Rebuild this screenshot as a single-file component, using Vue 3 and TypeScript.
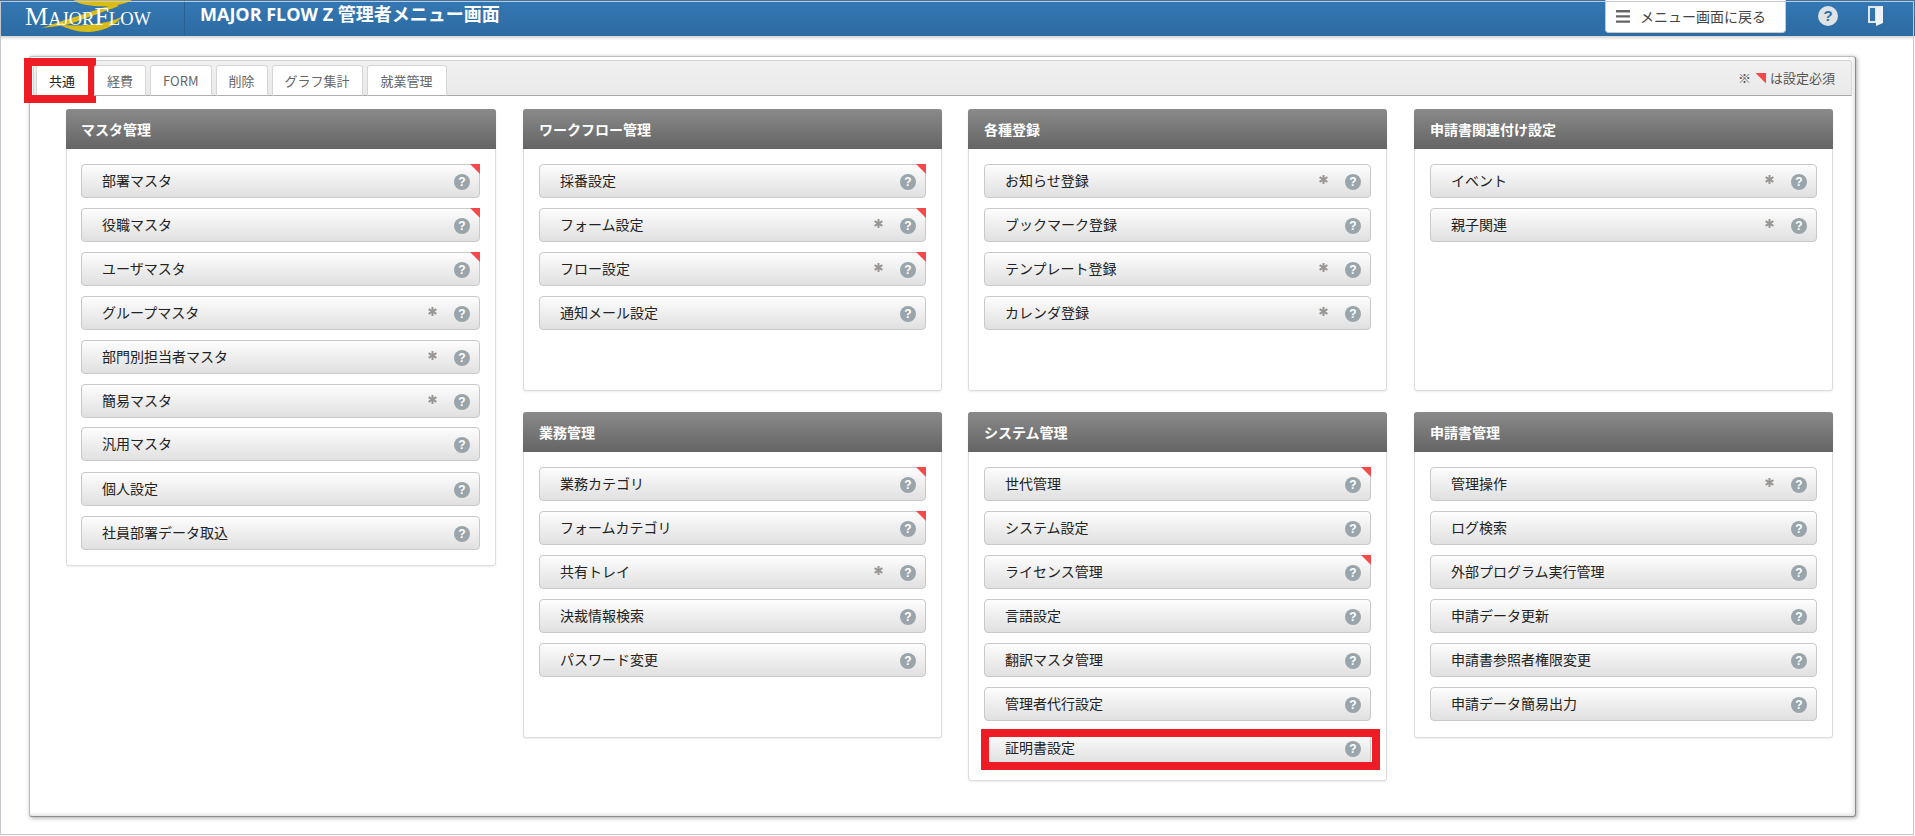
<script setup lang="ts">
interface Item { label: string; req?: boolean; star?: boolean; shift?: boolean; mark?: boolean }
interface Card { title: string; items: Item[]; cls?: string }
const tabs = ['共通', '経費', 'FORM', '削除', 'グラフ集計', '就業管理']
const columns: { cls: string; cards: Card[] }[] = [
  { cls: 'col1', cards: [
    { title: 'マスタ管理', items: [
      { label: '部署マスタ', req: true }, { label: '役職マスタ', req: true }, { label: 'ユーザマスタ', req: true },
      { label: 'グループマスタ', star: true }, { label: '部門別担当者マスタ', star: true }, { label: '簡易マスタ', star: true },
      { label: '汎用マスタ', shift: true }, { label: '個人設定' }, { label: '社員部署データ取込' }
    ] }
  ] },
  { cls: 'col2', cards: [
    { title: 'ワークフロー管理', cls: 'top', items: [
      { label: '採番設定', req: true }, { label: 'フォーム設定', req: true, star: true },
      { label: 'フロー設定', req: true, star: true }, { label: '通知メール設定' }
    ] },
    { title: '業務管理', cls: 'low', items: [
      { label: '業務カテゴリ', req: true }, { label: 'フォームカテゴリ', req: true }, { label: '共有トレイ', star: true },
      { label: '決裁情報検索' }, { label: 'パスワード変更' }
    ] }
  ] },
  { cls: 'col3', cards: [
    { title: '各種登録', cls: 'top', items: [
      { label: 'お知らせ登録', star: true }, { label: 'ブックマーク登録' },
      { label: 'テンプレート登録', star: true }, { label: 'カレンダ登録', star: true }
    ] },
    { title: 'システム管理', cls: 'low', items: [
      { label: '世代管理', req: true }, { label: 'システム設定' }, { label: 'ライセンス管理', req: true },
      { label: '言語設定' }, { label: '翻訳マスタ管理' }, { label: '管理者代行設定' }, { label: '証明書設定', mark: true }
    ] }
  ] },
  { cls: 'col4', cards: [
    { title: '申請書関連付け設定', cls: 'top', items: [{ label: 'イベント', star: true }, { label: '親子関連', star: true }] },
    { title: '申請書管理', cls: 'low', items: [
      { label: '管理操作', star: true }, { label: 'ログ検索' }, { label: '外部プログラム実行管理' },
      { label: '申請データ更新' }, { label: '申請書参照者権限変更' }, { label: '申請データ簡易出力' }
    ] }
  ] }
]
</script>

<template>
  <div class="page">
    <header class="topbar">
      <div class="logo">
        <svg class="swoosh" viewBox="0 0 110 36" width="110" height="36" aria-hidden="true">
          <path d="M50 0H108C100 5 85 7 70 6C60 5 52 3 50 0Z" fill="#d8bc1a" />
          <path d="M90 4C70 11 40 20 18 28C30 27 41 25 46 24C62 18 82 11 95 6Z" fill="#d8bc1a" />
          <path d="M34 24C45 30 60 34 73 31C85 29 93 23 99 16C90 21 80 23 70 24C58 26 46 26 34 24Z" fill="#d8bc1a" />
        </svg>
        <span class="logo-text"><b>M</b>AJOR<b>F</b>LOW</span>
      </div>
      <h1 class="title">MAJOR FLOW Z 管理者メニュー画面</h1>
      <button class="back">
        <svg width="14" height="13" viewBox="0 0 14 13" aria-hidden="true"><path d="M0 0h14v2.4H0zM0 5.2h14v2.4H0zM0 10.4h14v2.4H0z" fill="#666" /></svg>
        <span>メニュー画面に戻る</span>
      </button>
      <span class="help-top">?</span>
      <svg class="door" width="15" height="20" viewBox="0 0 15 20" aria-hidden="true">
        <path d="M0 0h15v17l-6 0v0H0z M2 2v13h5V2z" fill="#dfe6ee" fill-rule="evenodd" />
        <path d="M8 2l7-2v17l-7 3z" fill="#eef2f6" />
      </svg>
    </header>

    <main class="panel">
      <div class="tabbar">
        <div v-for="(t, i) in tabs" :key="t" class="tab" :class="{ active: i === 0 }">
          {{ t }}
          <span v-if="i === 0" class="redbox tabmark"></span>
        </div>
        <div class="legend">※ <i class="legend-tri"></i> は設定必須</div>
      </div>
      <div class="grid">
        <div v-for="col in columns" :key="col.cls" class="col">
          <section v-for="card in col.cards" :key="card.title" class="card" :class="[col.cls, card.cls]">
            <h2 class="card-head">{{ card.title }}</h2>
            <ul class="list">
              <li v-for="it in card.items" :key="it.label" class="item" :class="{ shift: it.shift }">
                <span class="label">{{ it.label }}</span>
                <svg v-if="it.star" class="star" width="9" height="9" viewBox="0 0 9 9" aria-hidden="true">
                  <path d="M4.5 0v9M.6 2.2l7.8 4.6M8.4 2.2L.6 6.8" stroke="#9a9692" stroke-width="2" />
                </svg>
                <span class="q">?</span>
                <i v-if="it.req" class="tri"></i>
                <span v-if="it.mark" class="redbox itemmark"></span>
              </li>
            </ul>
          </section>
        </div>
      </div>
    </main>
    <div class="frame"></div>
  </div>
</template>

<style>
html, body { margin: 0; background: #fff; overflow: hidden; }
</style>

<style scoped>
.page {
  position: relative;
  width: 1915px;
  height: 836px;
  overflow: hidden;
  font-family: "Noto Sans CJK JP", "Open Sans", sans-serif;
  background: #fff;
  color: #333;
}
.frame {
  position: absolute;
  left: 0;
  top: 1px;
  width: 1912px;
  height: 832px;
  border: 1px solid #c4c8cc;
  pointer-events: none;
}
.topbar {
  display: flex;
  align-items: flex-start;
  height: 36px;
  background: linear-gradient(#3478b3, #2d6ba3);
  box-shadow: 0 2px 3px rgba(0, 0, 0, .18);
  box-sizing: border-box;
}
.logo {
  position: relative;
  width: 184px;
  height: 36px;
  flex: none;
  border-right: 1px solid #2a5f92;
  overflow: hidden;
}
.swoosh { position: absolute; left: 24px; top: 0; }
.logo-text {
  position: absolute;
  left: 25px;
  top: 3px;
  font-family: "Liberation Serif", serif;
  font-size: 18.5px;
  line-height: 27px;
  color: #fff;
  white-space: nowrap;
}
.logo-text b { font-weight: 400; font-size: 26px; }
.title {
  margin: 0 0 0 15px;
  font-size: 18px;
  line-height: 28px;
  font-weight: 700;
  color: #fff;
  white-space: nowrap;
  flex: 1;
  font-family: "Open Sans", "Noto Sans CJK JP", sans-serif;
}
.back {
  display: flex;
  align-items: center;
  gap: 10px;
  width: 181px;
  height: 33px;
  padding: 0 0 0 10px;
  margin-right: 32px;
  box-sizing: border-box;
  background: #fff;
  border: 1px solid #c8c8c8;
  border-top: 0;
  border-radius: 0 0 4px 4px;
  font: 14px "Noto Sans CJK JP", sans-serif;
  color: #444;
  white-space: nowrap;
}
.help-top {
  width: 20px;
  height: 20px;
  margin-top: 6px;
  border-radius: 50%;
  background: #dfe3e6;
  color: #2f6fa8;
  font: 700 15px/20px "Liberation Sans", sans-serif;
  text-align: center;
}
.door { margin: 6px 32px 0 30px; flex: none; }

.panel {
  width: 1827px;
  height: 761px;
  margin: 20px 0 0 29px;
  padding: 3px;
  box-sizing: border-box;
  background: #fff;
  border: 1px solid #bdbdbd;
  border-right-color: #8c8c8c;
  border-bottom-color: #8c8c8c;
  border-radius: 3px;
  box-shadow: 1px 1px 4px rgba(0, 0, 0, .35), inset -2px -2px 3px rgba(0, 0, 0, .1);
}
.tabbar {
  display: flex;
  align-items: flex-end;
  gap: 4px;
  height: 36px;
  padding: 0 2px;
  box-sizing: border-box;
  background: linear-gradient(#f1f1f1, #e9e9e9);
  border: 1px solid #d4d4d4;
  border-bottom: 1px solid #a8a8a8;
  border-radius: 3px 3px 0 0;
}
.tab {
  position: relative;
  height: 31px;
  margin-bottom: -1px;
  padding: 0 12px;
  box-sizing: border-box;
  background: #fff;
  border: 1px solid #d6d6d6;
  border-bottom: 1px solid #b0b0b0;
  border-radius: 3px 3px 0 0;
  font-size: 13px;
  line-height: 30px;
  color: #666;
  white-space: nowrap;
}
.tab:nth-child(6) { padding: 0 13px; }
.tab.active {
  color: #222;
  border-bottom-color: #fff;
  width: 54px;
}
.legend {
  margin: 0 14px 6px auto;
  font-size: 13px;
  line-height: 22px;
  color: #555;
  display: flex;
  align-items: center;
  gap: 4px;
  white-space: nowrap;
}
.legend-tri {
  width: 11px;
  height: 11px;
  background: #f64a4a;
  clip-path: polygon(0 0, 100% 0, 100% 100%);
}
.redbox {
  position: absolute;
  border: 8px solid #ee1c25;
  pointer-events: none;
}
.tabmark { left: -13px; top: -8px; width: 56px; height: 29px; }
.itemmark { left: -4px; top: -3px; width: 383px; height: 25px; }

.grid {
  display: grid;
  grid-template-columns: 457px 445px 446px 419px;
  margin: 13px 0 0 33px;
}
.col {
  display: flex;
  flex-direction: column;
  gap: 21px;
  padding-right: 26px;
}
.col:first-child,
.col:nth-child(3) { padding-right: 27px; }
.col:last-child { padding-right: 0; }
.card {
  box-sizing: border-box;
  background: #fff;
  border: 1px solid #ddd;
  border-radius: 3px;
  box-shadow: 0 1px 2px rgba(0, 0, 0, .08);
}
.card.top { height: 282px; }
.card.low { min-height: 326px; }
.card-head {
  margin: -1px -1px 0;
  height: 40px;
  padding-left: 16px;
  background: linear-gradient(#8a8a8a, #646464);
  border-radius: 3px 3px 0 0;
  font-size: 14px;
  font-weight: 700;
  line-height: 40px;
  color: #fff;
}
.card.col1 .card-head { padding-left: 15px; }
.list {
  list-style: none;
  margin: 0;
  padding: 15px;
  display: flex;
  flex-direction: column;
  gap: 10px;
}
.card.col1 .list { padding-left: 14px; }
.item {
  position: relative;
  display: flex;
  align-items: center;
  height: 34px;
  padding: 0 9px 0 20px;
  box-sizing: border-box;
  background: linear-gradient(#fdfdfd, #e0e0e0);
  border: 1px solid #c9c9c9;
  border-radius: 4px;
  font-size: 14px;
  color: #222;
  white-space: nowrap;
}
.item.shift { margin-top: -1px; margin-bottom: 1px; }
.label { flex: 1; margin-top: -2px; }
.star { margin-right: 17px; margin-top: -3px; }
.q {
  width: 16px;
  height: 16px;
  margin-top: 1px;
  border-radius: 50%;
  background: #9aa5ab;
  color: #fff;
  font: 700 12px/16px "Liberation Sans", sans-serif;
  text-align: center;
}
.tri {
  position: absolute;
  right: -1px;
  top: -1px;
  width: 10px;
  height: 10px;
  background: #f64a4a;
  clip-path: polygon(0 0, 100% 0, 100% 100%);
}
</style>
